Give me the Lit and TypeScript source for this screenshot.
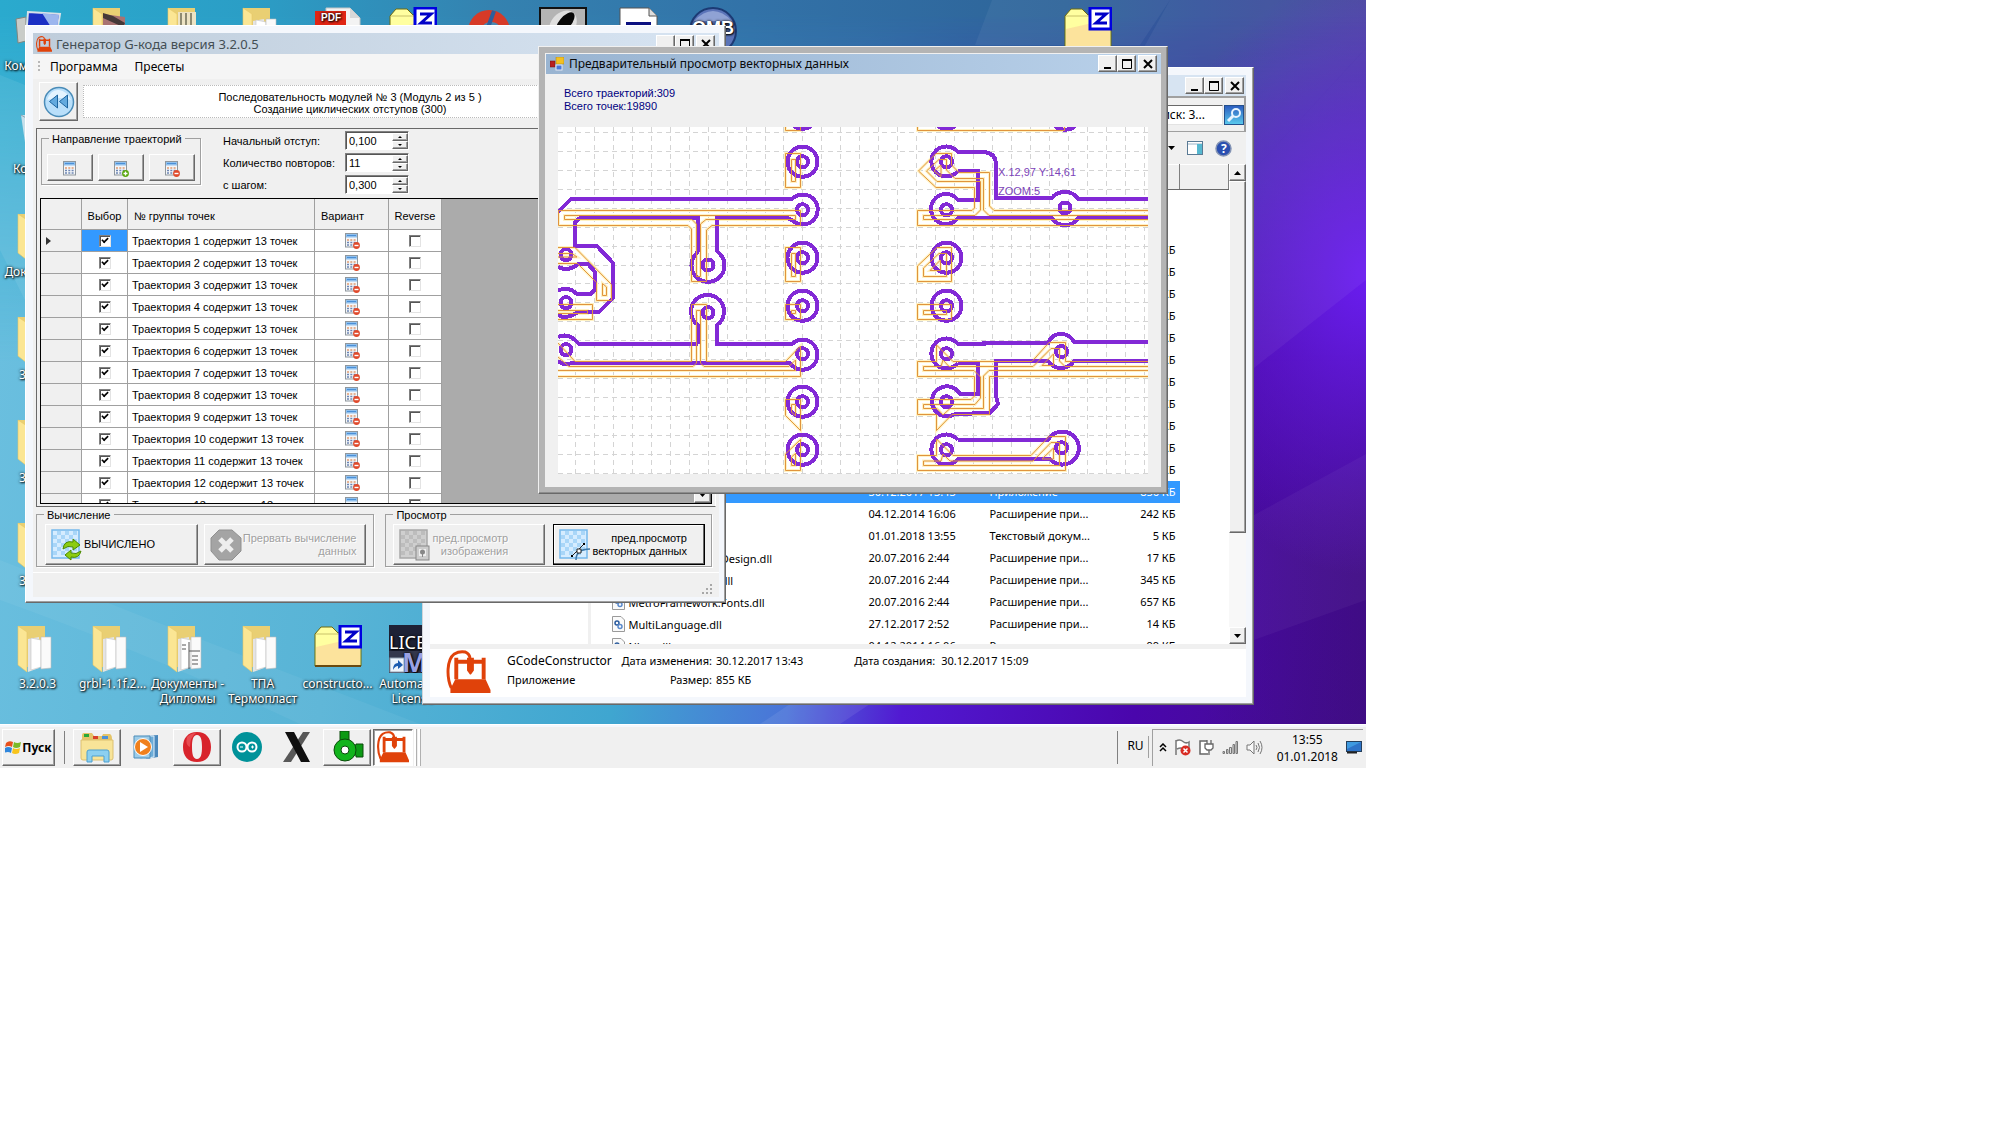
import { LitElement, html, svg, css } from "lit";
import { customElement, property } from "lit/decorators.js";

type Kind = "plain" | "plus" | "minus";

const gcodeIcon = svg`
  <path d="M5 39C0 28 0 10 8 4Q13 1 19 2Q24 4 24 9" fill="none" stroke="#e0420a" stroke-width="3"/>
  <path d="M10 30V8M38 30V8M8 12H40" fill="none" stroke="#e0420a" stroke-width="4"/>
  <path d="M21 8H28V21L25 25H24L21 21Z M9 30H40L45 41V44H4V40Z" fill="#e0420a"/>`;

const calcIcon = (kind: Kind) => html`<svg class="calc" viewBox="0 0 16 16" width="16" height="16">
  <rect x="1.500" y=".5" width="12" height="13.500" fill="#f4f6f8" stroke="#8f979e"/>
  <rect x="2" y="1" width="11" height="3.500" fill="#8fc0ee"/>
  <path d="M3 2.500H12" stroke="#4b8fd6"/>
  <path d="M3 7H12" stroke="#e09a70" stroke-width="1.500" stroke-dasharray="2 1.300"/>
  <path d="M3 9.500H12M3 12H12" stroke="#6d86b4" stroke-width="1.500" stroke-dasharray="2 1.300"/>
  ${kind === "plus"
    ? svg`<circle cx="12.500" cy="12.500" r="3.400" fill="#57a60a"/><path d="M10.500 12.500h4M12.500 10.500v4" stroke="#fff" stroke-width="1.300"/>`
    : kind === "minus"
      ? svg`<circle cx="12.500" cy="12.500" r="3.400" fill="#e04a2c"/><path d="M10.500 12.500h4" stroke="#fff" stroke-width="1.400"/>`
      : ""}
</svg>`;

const zFolder = svg`
  <path d="M1 9L7 2H18L24 8H47V41H1Z" fill="#ffffa0" stroke="#6d6a10"/>
  <path d="M2 22L46 12V40H2Z" fill="#fbd79a" opacity=".7"/>
  <path d="M2 9H26" stroke="#c9c26a"/>
  <path d="M1 41H47" stroke="#6a4a10" stroke-width="2"/>
  <rect x="26" y="1" width="21" height="21" fill="#fff" stroke="#0000e0" stroke-width="3"/>
  <path d="M31 7H42L32 16H43" fill="none" stroke="#0000c8" stroke-width="3"/>`;

const openFolder = (inner: unknown) => svg`
  <path d="M4 1H31V42H12Z" fill="#e9cf73"/>
  ${inner}
  <path d="M4 1L13 7V47L4 40Z" fill="#fbe694" stroke="#e6c766" stroke-width=".6"/>`;
const papers = svg`
  <path d="M14 14L25 12V43L14 47Z" fill="#e4e4e4"/>
  <path d="M17 13L27 15V42L17 45Z" fill="#fff" stroke="#c4c4c4" stroke-width=".6"/>
  <path d="M27 12L37 12V43L27 44Z" fill="#fafafa" stroke="#bcbcbc" stroke-width=".6"/>`;

const deskIcons: Record<string, unknown> = {
  folder: openFolder(papers),
  docs: openFolder(svg`${papers}<path d="M25 17V44M25 26H36M28 31h6M28 35h6M28 39h6M18 20h4M18 24h4" stroke="#555"/>`),
  red: openFolder(svg`<path d="M14 7L36 10V30H14Z" fill="#a87272"/><path d="M14 6L24 9L36 16L34 20L14 11Z" fill="#453838"/>`),
  books: openFolder(svg`<path d="M14 5H32V40H14Z" fill="#ece3c4"/><path d="M17 6V40M22 6V40M27 6V40" stroke="#8d8a72" stroke-width="2"/>`),
  z: zFolder,
  computer: svg`<path d="M2 12L12 10V34L4 36Z" fill="#c9ccc8" stroke="#80857f"/><path d="M14 5L46 7L42 32L12 30Z" fill="#1a2fc4" stroke="#d8e0e8" stroke-width="2"/><path d="M28 6L45 8L42 28Z" fill="#9cb6ee"/>`,
  bin: svg`<path d="M7 5H41L36 46H13Z" fill="#d9e6ee" opacity=".85"/><path d="M7 5L14 9L17 40" stroke="#8aa3b2" fill="none"/>`,
  pdf: svg`<path d="M12 1H36L46 11V47H12Z" fill="#f3f3f3" stroke="#c4c4c4"/><path d="M36 1V11H46Z" fill="#d8d8d8"/><rect x="1" y="4" width="31" height="14" fill="#e02514"/><text x="7" y="14" font-family="Liberation Sans" font-size="10" font-weight="bold" fill="#fff">PDF</text>`,
  cc: svg`<circle cx="25" cy="24" r="21" fill="#d63a28"/><circle cx="27" cy="26" r="11" fill="#4a88b0"/><path d="M30 4L22 26" stroke="#2d5f9c" stroke-width="4"/>`,
  pen: svg`<rect x="1" y="1" width="46" height="46" fill="#b4b4b4" stroke="#111" stroke-width="2"/><ellipse cx="24" cy="18" rx="12" ry="16" transform="rotate(40 24 18)" fill="#dedede"/><ellipse cx="26" cy="16" rx="6" ry="13" transform="rotate(40 26 16)" fill="#080808"/>`,
  doc: svg`<path d="M6 1H35L43 9V47H6Z" fill="#fff" stroke="#555"/><path d="M35 1V9H43" fill="#ddd" stroke="#555"/><rect x="12" y="15" width="25" height="18" fill="#0a1080"/>`,
  omb: svg`<circle cx="24" cy="24" r="23" fill="#5b74b8" stroke="#1c3a74" stroke-width="2"/><path d="M5 14Q24 -6 43 14Z" fill="#8fa2d4"/><text x="3" y="27" font-family="Liberation Sans" font-size="18" font-weight="bold" fill="#fff">OMB</text>`,
  license: svg`<rect width="48" height="48" fill="#1e2236"/><text x="0" y="24" font-family="Noto Sans" font-size="18" fill="#fff">LICE</text><rect y="26" width="48" height="22" fill="#33374c"/><text x="13" y="47" font-family="Noto Sans" font-size="27" font-weight="bold" fill="#9aa2e4">M</text><rect x="1" y="33" width="14" height="14" fill="#eef4fc" stroke="#90a0b0"/><path d="M4 45Q4 38 9 38V35L14 40L9 44V41Q6 41 4 45Z" fill="#1c5bb0"/>`,
};

interface Shortcut { icon: string; label: string; col: number; row: number }
const shortcuts: Shortcut[] = [
  { icon: "computer", label: "Компьютер", col: 1, row: 1 },
  { icon: "red", label: "", col: 2, row: 1 },
  { icon: "books", label: "", col: 3, row: 1 },
  { icon: "folder", label: "", col: 4, row: 1 },
  { icon: "pdf", label: "", col: 5, row: 1 },
  { icon: "z", label: "", col: 6, row: 1 },
  { icon: "cc", label: "", col: 7, row: 1 },
  { icon: "pen", label: "", col: 8, row: 1 },
  { icon: "doc", label: "", col: 9, row: 1 },
  { icon: "omb", label: "", col: 10, row: 1 },
  { icon: "z", label: "", col: 15, row: 1 },
  { icon: "bin", label: "Корзина", col: 1, row: 2 },
  { icon: "folder", label: "Документы", col: 1, row: 3 },
  { icon: "folder", label: "3.2.0.0", col: 1, row: 4 },
  { icon: "folder", label: "3.2.0.1", col: 1, row: 5 },
  { icon: "folder", label: "3.2.0.2", col: 1, row: 6 },
  { icon: "folder", label: "3.2.0.3", col: 1, row: 7 },
  { icon: "folder", label: "grbl-1.1f.2...", col: 2, row: 7 },
  { icon: "docs", label: "Документы - Дипломы", col: 3, row: 7 },
  { icon: "folder", label: "ТПА Термопласт", col: 4, row: 7 },
  { icon: "z", label: "constructo...", col: 5, row: 7 },
  { icon: "license", label: "Automation License", col: 6, row: 7 },
];

@customElement("caption-buttons")
class CaptionButtons extends LitElement {
  static styles = css`
    :host { display: flex; gap: 2px; flex: none; }
    .pair { display: flex; }
    button { width: 19px; height: 17px; padding: 0; border: 1px solid; border-color: #fff #696969 #696969 #fff; box-shadow: inset -1px -1px #a0a0a0; background: #f0f0f0; display: grid; place-items: center; }
    svg { display: block; }
  `;
  render() {
    return html`
      <div class="pair">
        <button aria-label="Свернуть"><svg width="12" height="12"><path d="M2 10H9" stroke="#000" stroke-width="2"/></svg></button>
        <button aria-label="Развернуть"><svg width="12" height="12" fill="none" stroke="#000"><path d="M1.500 1.500H10.500V10.500H1.500Z"/><path d="M1 2H11" stroke-width="2"/></svg></button>
      </div>
      <button aria-label="Закрыть"><svg width="12" height="12"><path d="M2 2L10 10M10 2L2 10" stroke="#000" stroke-width="2"/></svg></button>`;
  }
}

@customElement("vector-canvas")
class VectorCanvas extends LitElement {
  static styles = css`
    :host { display: block; background: #fff; }
    svg { display: block; width: 100%; height: 100%; }
    .grid { stroke: #d4d4d4; stroke-dasharray: 5 4; }
    .copper { fill: none; stroke: #8229d6; stroke-width: 4; }
    .tool { fill: none; stroke: #e0943c; stroke-width: 1; }
    .halo { fill: none; stroke: #fff2c4; stroke-width: 3; }
    .note { font: 11px "Liberation Sans", sans-serif; fill: #7c44b8; }
  `;
  private copper = [
    "M558 212L571 199H792A15 15 0 1 1 792 220L787 218H717V251L720 254A16.500 16.500 0 1 1 696 254L698 251V218H580L575 222V246H597L613 263V298L599 312H578Q566 320 558 315",
    "M558 267Q569 272 578 264H588L595 272V289L591 294H577Q567 285 558 291",
    "M698 344V325A16.500 16.500 0 1 1 717 325V344H792A15 15 0 1 1 790 363H572Q564 366 558 361",
    "M698 344H579Q569 332 558 337",
    "M958 171A15 15 0 1 1 958 152H984Q996 153 996 165V198H1052Q1056 192 1065 192T1078 199H1148",
    "M958 171H978V200H958A15 15 0 1 0 958 218H1052Q1056 225 1065 225T1078 218H1148",
    "M958 363A15 15 0 1 1 958 344H984V343H1048Q1052 334 1061 334T1074 342H1148",
    "M958 363H978V394H960A15 15 0 1 0 955 414L990 413L998 404L996 396V361H1048Q1053 368 1061 368T1074 361H1148",
    "M958 440H1048A16.500 16.500 0 1 1 1050 459H958A15 15 0 1 1 958 440",
  ];
  private pads: [number, number, number][] = [
    [802.5, 113.7, 15], [802.5, 161.7, 15], [802.5, 257.7, 15], [802.5, 305.7, 15], [802.5, 401.7, 15], [802.5, 449.7, 15],
    [946.5, 113.7, 15], [946.5, 257.7, 15], [946.5, 305.7, 15], [1065, 113.7, 16],
  ];
  private holes: [number, number][] = [
    [802.5, 161.7], [802.5, 209.7], [802.5, 257.7], [802.5, 305.7], [802.5, 353.7], [802.5, 401.7], [802.5, 449.7],
    [946.5, 161.7], [946.5, 209.7], [946.5, 257.7], [946.5, 305.7], [946.5, 353.7], [946.5, 401.7], [946.5, 449.7],
    [1065, 208], [1061.5, 351.5], [1061.5, 447.7], [708, 265], [708, 312.7], [566, 254.7], [566, 302.7], [566, 349.7],
  ];
  private tool = [
    "M785.500 127V130.500H800.500V127",
    "M785.500 153.500h15v34h-15zM791.500 159.500h4v22h-4z",
    "M800.500 210.500V225.500H712L706.500 230V281.500H691.500V229L688 225.500H558.500V210.500Z",
    "M795.500 215.500V219.500H706L700.500 224V276.500H696.500V224L692 219.500H564.500V215.500Z",
    "M785.500 247.500h15v34h-15zM791.500 253.500h4v23h-4z",
    "M785.500 304.500h15v15h-15zM791.500 310.500h4v3h-4z",
    "M558 343L575 361.500H691.500V304.500H706.500V361.500H785.500L800.500 346V376.500H558",
    "M558 357L569 366.500H693L696.500 363V310.500H700.500V363L704 366.500H789L795.500 360V370.500H558",
    "M785.500 399.500H800.500V430.500L785.500 415.500ZM791.500 404.500H795.500V416L791.500 412Z",
    "M785.500 454L800.500 439.500V470.500H785.500ZM791.500 457L795.500 453.500V465.500H791.500Z",
    "M558 304.500H592.500V319.500H558M558 310.500H587.500V313.500H558",
    "M558 247.500H575L611.500 284.500V300.500H596.500V282.500L577.500 263.500H558M602.500 283.500L606.500 287V295.500H602.500ZM558 253.500H572L577 257H558",
    "M917.500 127V130.500H1064.500V127",
    "M1148 210.500H994L989.500 206V172.500H959L951.500 165V153.500H936L918.500 171L936 187.500H974.500V208L972 210.500H917.500V225.500H1148",
    "M1148 215.500H989L983.500 210V178.500H955L946.500 170V159.500H939L926.500 171L937 181.500H980.500V210L975 215.500H923.500V219.500H1148",
    "M934 171L941 165V176.500Z",
    "M917.500 266L937 247.500H951.500V281.500H917.500ZM923.500 268L939 253.500H946.500V276.500H923.500ZM930 270.500L940.500 260V270.500Z",
    "M917.500 304.500h34v15h-34zM923.500 310.500h23v4h-23z",
    "M1148 361.500H1065.500V342.500H1049L1032 361.500H953L936.500 345V361.500H917.500V376.500H974.500V396L971 399.500H917.500V414.500H936.500V430.500L952 414.500H989.500V376.500H1148",
    "M1148 366.500H1065L1059.500 361V348.500H1051L1033 366.500H949L943 360L941 366.500H923.500V370.500H974L980.500 377V398L975 404.500H923.500V408.500H937L943 415L950 408.500H983.500V376L989 370.500H1148",
    "M1042 365.500L1053.500 354V365.500Z",
    "M917.500 455.500H936.500V439L953 455.500H1031L1049 436.500H1065.500V470.500H917.500Z",
    "M923.500 461H941L943 454L950 461H1033L1051 442.500H1059.500V465.500H923.500ZM1042 459L1053.500 448V459Z",
  ];
  render() {
    const v = Array.from({ length: 31 }, (_, i) => Math.round(575 + i * 18.95) + 0.5);
    const h = Array.from({ length: 19 }, (_, i) => Math.round(132 + i * 18.93) + 0.5);
    return html`<svg viewBox="558 127 590 347" preserveAspectRatio="xMidYMid slice" role="img" aria-label="Векторные данные">
      <g class="grid">
        ${v.map((x) => svg`<path d="M${x} 127V474"/>`)}
        ${h.map((y) => svg`<path d="M558 ${y}H1148"/>`)}
      </g>
      <path class="halo" d=${this.tool.join("")}/>
      <g class="copper" shape-rendering="crispEdges">
        ${this.copper.map((d) => svg`<path d=${d}/>`)}
        ${this.pads.map(([x, y, r]) => svg`<circle cx=${x} cy=${y} r=${r}/>`)}
        ${this.holes.map(([x, y]) => svg`<circle cx=${x} cy=${y} r="5.500"/>`)}
      </g>
      <path class="tool" d=${this.tool.join("")}/>
      <text class="note" x="998" y="176">X.12,97 Y:14,61</text>
      <text class="note" x="998" y="195">ZOOM:5</text>
    </svg>`;
  }
}

@customElement("preview-window")
class PreviewWindow extends LitElement {
  static styles = css`
    :host { display: flex; flex-direction: column; box-sizing: border-box; padding: 6px; background: #b4b4b4; border: 1px solid; border-color: #f0f0f0 #696969 #696969 #f0f0f0; box-shadow: inset -1px -1px #8c8c8c; font: 11px "Liberation Sans", Arial, sans-serif; }
    .title { box-sizing: border-box; display: flex; align-items: center; gap: 5px; height: 21px; padding: 0 4px 1px 4px; background: linear-gradient(90deg, #99b4d1, #b9d1ea); border-top: 1px solid #f0f0f0; border-left: 1px solid #f0f0f0; font: 12px "Noto Sans", sans-serif; color: #0a0a0a; }
    .title span { flex: 1; white-space: nowrap; }
    .body { flex: 1; display: flex; flex-direction: column; min-height: 0; background: #f0f0f0; padding: 13px 13px 13px; }
    .totals { margin: 0 0 13px 6px; font-size: 11px; line-height: 13px; color: #000080; height: 27px; }
    vector-canvas { flex: 1; min-height: 0; }
  `;
  render() {
    return html`
      <div class="title">
        <svg width="14" height="14"><rect x="0" y="4" width="5" height="6" fill="#b82020" stroke="#701010" stroke-width=".5"/><rect x="6" y="0" width="8" height="7" fill="#f4c020" stroke="#a88010" stroke-width=".5"/><rect x="6" y="8" width="6" height="5" fill="#4a78d8" stroke="#e4e8f4"/></svg>
        <span>Предварительный просмотр векторных данных</span>
        <caption-buttons></caption-buttons>
      </div>
      <div class="body">
        <div class="totals">Всего траекторий:309<br>Всего точек:19890</div>
        <vector-canvas></vector-canvas>
      </div>`;
  }
}

@customElement("generator-window")
class GeneratorWindow extends LitElement {
  @property({ type: Number }) rows = 13;
  static styles = css`
    :host { display: flex; flex-direction: column; box-sizing: border-box; padding: 7px 6px 5px 7px; background: #f4f7fc; border: 1px solid; border-color: #fff #696969 #696969 #fff; box-shadow: inset -1px -1px #a0a0a0; font: 11px "Liberation Sans", Arial, sans-serif; color: #000; }
    .title { display: flex; align-items: center; gap: 4px; height: 21px; padding: 0 4px 0 3px; background: linear-gradient(90deg, #bfcddb, #d7e4f2); font: 13px "Noto Sans", sans-serif; color: #434e54; }
    .title span { flex: 1; white-space: nowrap; }
    .menu { display: flex; align-items: center; gap: 17px; height: 25px; background: #f5f5f5; padding-left: 5px; font: 12px "Noto Sans", sans-serif; }
    .menu a { color: inherit; text-decoration: none; }
    .grip { width: 2px; height: 12px; margin-right: -7px; background: repeating-linear-gradient(#b8b8b8 0 2px, transparent 2px 4px); }
    .body { flex: 1; display: flex; flex-direction: column; background: #f0f0f0; padding: 3px 3px 0 3px; min-height: 0; }
    button { font: inherit; color: inherit; padding: 0; background: #f0f0f0; border: 1px solid; border-color: #fff #696969 #696969 #fff; box-shadow: inset -1px -1px #a0a0a0; }
    .module { display: flex; align-items: center; gap: 5px; padding-left: 3px; }
    .back { width: 39px; height: 39px; display: grid; place-items: center; }
    .caption { flex: 0 1 534px; height: 33px; background: #fff; border: 1px dotted #bbb; text-align: center; line-height: 12px; padding-top: 5px; box-sizing: border-box; }
    .panel { flex: 1; display: flex; flex-direction: column; min-height: 0; margin-top: 7px; border: 1px solid; border-color: #696969 #fff #696969 #696969; padding: 2px 3px; }
    .top { display: flex; align-items: flex-start; gap: 22px; height: 67px; padding-left: 1px; }
    fieldset { margin: 0; padding: 0; border: 1px solid #a0a0a0; box-shadow: 1px 1px #fff; min-width: 0; }
    legend { margin-left: 7px; padding: 2px 3px 0; line-height: 13px; }
    .dir { width: 160px; box-sizing: border-box; height: 54px; }
    .dir .set { display: flex; gap: 5px; padding: 8px 5px 0; }
    .dir button { width: 46px; height: 27px; display: grid; place-items: center; }
    .dir svg { margin: 2px 0 0 0; }
    .nums { display: grid; grid-template-columns: 122px 64px; row-gap: 3px; align-items: center; white-space: nowrap; }
    .spin { display: flex; height: 19px; box-sizing: border-box; border: 1px solid; border-color: #808080 #fff #fff #808080; box-shadow: inset 1px 1px #555; background: #fff; padding: 1px 0 0 2px; }
    .spin input { flex: 1; min-width: 0; border: 0; background: none; padding: 0 1px; font: inherit; outline: 0; }
    .steps { width: 16px; display: flex; flex-direction: column; }
    .steps button { flex: 1; display: grid; place-items: center; min-height: 0; }
    .list { flex: 1; min-height: 0; display: flex; overflow: hidden; background: #ababab; border: 1px solid #000; }
    .scroll { width: 17px; margin-left: auto; display: flex; flex-direction: column; justify-content: flex-end; background: #ececec; }
    .scroll button { height: 17px; display: grid; place-items: center; }
    table { border-collapse: separate; border-spacing: 0; table-layout: fixed; width: 401px; background: #fff; align-self: flex-start; }
    th, td { box-sizing: border-box; height: 22px; padding: 0; font-weight: normal; border-right: 1px solid #a0a0a0; border-bottom: 1px solid #a0a0a0; text-align: center; white-space: nowrap; overflow: hidden; line-height: 14px; }
    thead th { height: 31px; background: #f0f0f0; padding-top: 3px; }
    th { background: #f0f0f0; }
    tbody th { text-align: left; padding-left: 5px; }
    .name { text-align: left; padding-left: 4px; }
    th.name { padding-left: 6px; }
    th.opt { text-align: left; padding-left: 6px; }
    .current { background: #3399ff; }
    .c0 { width: 41px; } .c1 { width: 46px; } .c2 { width: 187px; } .c3 { width: 74px; } .c4 { width: 53px; }
    .calc { display: block; margin: 0 auto; }
    td input { appearance: none; display: block; width: 12px; height: 12px; margin: 0 auto; border: 1px solid; border-color: #808080 #e3e3e3 #e3e3e3 #808080; box-shadow: inset 1px 1px #555; background: #fff; }
    td input:checked { position: relative; }
    td input:checked::after { content: ""; position: absolute; left: 1px; top: 1px; width: 6px; height: 3px; border-left: 2px solid #000; border-bottom: 2px solid #000; box-sizing: content-box; scale: 0.8; rotate: -45deg; }
    .groups { display: flex; gap: 11px; padding-right: 4px; }
    .groups fieldset { flex: 339 1 0; height: 60px; box-sizing: border-box; }
    .groups fieldset.view { flex: 327 1 0; }
    .groups .set { display: grid; grid-template-columns: 153fr 163fr; gap: 6px; padding: 2px 7px 0 8px; }
    .groups .view .set { grid-template-columns: 1fr 1fr; gap: 8px; padding: 2px 6px 0 7px; }
    .big { min-width: 0; height: 41px; display: flex; align-items: center; gap: 1px; padding: 0 10px 0 5px; line-height: 13px; text-align: right; white-space: nowrap; }
    .big svg { flex: none; }
    .big span { flex: 1; }
    .big.left span { text-align: left; }
    .big:disabled { color: #a0a0a0; text-shadow: 1px 1px #fff; }
    .big.off { padding-right: 36px; }
    .big.focus { border-color: #000; box-shadow: inset -1px -1px #696969, inset 1px 1px #fff; padding-right: 17px; }
    .status { height: 23px; border-top: 1px solid #fff; margin: 5px -3px 0; display: flex; justify-content: flex-end; align-items: flex-end; padding: 0 6px 1px; box-sizing: content-box; }
  `;
  private num(id: string, label: string, value: string) {
    return html`<label for=${id}>${label}</label>
      <div class="spin"><input id=${id} .value=${value}>
        <div class="steps">
          <button aria-label="Больше"><svg width="4" height="2"><path d="M2 0L4 2H0Z"/></svg></button>
          <button aria-label="Меньше"><svg width="4" height="2"><path d="M0 0H4L2 2Z"/></svg></button>
        </div></div>`;
  }
  private tile(grey: boolean, badge: unknown) {
    const [a, b, c] = grey ? ["#cfcfcf", "#bdbdbd", "#a8a8a8"] : ["#d5ecff", "#a9d6f8", "#74b8ec"];
    const cells = [];
    for (let y = 0; y < 6; y++) for (let x = 0; x < 6; x++) if ((x + y) % 2) cells.push(svg`<rect x=${2 + x * 4} y=${2 + y * 4} width="4" height="4" fill=${b}/>`);
    return html`<svg width="32" height="32"><rect x="1" y="1" width="27" height="28" fill=${a} stroke=${c} stroke-width="1.500"/>${cells}${badge}</svg>`;
  }
  render() {
    return html`
      <div class="title">
        <svg width="16" height="16" viewBox="0 0 45 45">${gcodeIcon}</svg>
        <span>Генератор G-кода версия 3.2.0.5</span>
        <caption-buttons></caption-buttons>
      </div>
      <nav class="menu"><i class="grip"></i><a href="#p">Программа</a><a href="#s">Пресеты</a></nav>
      <div class="body">
        <div class="module">
          <button class="back" aria-label="Назад"><svg width="32" height="32"><circle cx="16" cy="16" r="14.500" fill="#b9dffa" stroke="#4a8cb8" stroke-width="1.500"/><path d="M4 14Q8 3 16 4T28 14Q16 10 4 14Z" fill="#e4f4ff"/><path d="M14.500 9V22L6.500 15.500ZM24.500 9V22L16.500 15.500Z" fill="#63aade" stroke="#1e66a0"/></svg></button>
          <div class="caption">Последовательность модулей № 3 (Модуль 2 из 5 )<br>Создание циклических отступов (300)</div>
        </div>
        <div class="panel">
          <div class="top">
            <fieldset class="dir"><legend>Направление траекторий</legend>
              <div class="set">
                <button aria-label="Исходное">${calcIcon("plain")}</button>
                <button aria-label="Добавить">${calcIcon("plus")}</button>
                <button aria-label="Убрать">${calcIcon("minus")}</button>
              </div>
            </fieldset>
            <div class="nums">
              ${this.num("offset", "Начальный отступ:", "0,100")}
              ${this.num("count", "Количество повторов:", "11")}
              ${this.num("step", "с шагом:", "0,300")}
            </div>
          </div>
          <div class="list">
            <table>
              <colgroup><col class="c0"><col class="c1"><col class="c2"><col class="c3"><col class="c4"></colgroup>
              <thead><tr><th></th><th>Выбор</th><th class="name">№ группы точек</th><th class="opt">Вариант</th><th>Reverse</th></tr></thead>
              <tbody>
                ${Array.from({ length: this.rows }, (_, i) => html`<tr>
                  <th>${i === 0 ? html`<svg width="6" height="8"><path d="M0 0L5 4L0 8Z" fill="#333"/></svg>` : ""}</th>
                  <td class=${i === 0 ? "current" : ""}><input type="checkbox" checked aria-label="Выбор ${i + 1}"></td>
                  <td class="name">Траектория ${i + 1} содержит 13 точек</td>
                  <td>${calcIcon("minus")}</td>
                  <td><input type="checkbox" aria-label="Reverse ${i + 1}"></td>
                </tr>`)}
              </tbody>
            </table>
            <div class="scroll"><button aria-label="Вниз"><svg width="7" height="4"><path d="M0 0H7L3.500 4Z"/></svg></button></div>
          </div>
        </div>
        <div class="groups">
          <fieldset><legend>Вычисление</legend>
            <div class="set">
              <button class="big left">${this.tile(false, svg`<path d="M12 20Q13 11 22 13V10L29 16L22 21V18Q17 16 12 20Z" fill="#8ccc10" stroke="#4a8a00"/><path d="M30 22Q28 30 20 28V31L14 26L20 21V24Q25 26 30 22Z" fill="#8ccc10" stroke="#4a8a00"/>`)}<span>ВЫЧИСЛЕНО</span></button>
              <button class="big" disabled><svg width="32" height="32"><path d="M9 1H22L31 9V22L22 31H9L1 22V9Z" fill="#a4a4a4" stroke="#909090"/><path d="M10 10L22 22M22 10L10 22" stroke="#eee" stroke-width="5"/></svg><span>Прервать вычисление<br>данных</span></button>
            </div>
          </fieldset>
          <fieldset class="view"><legend>Просмотр</legend>
            <div class="set">
              <button class="big off" disabled>${this.tile(true, svg`<rect x="17" y="17" width="13" height="14" fill="#ccc" stroke="#888"/><path d="M20 20H27V27H20Z" fill="#eee"/><circle cx="23.500" cy="23" r="2.500" fill="#888"/><path d="M23.500 23V28" stroke="#888"/>`)}<span>пред.просмотр<br>изображения</span></button>
              <button class="big focus">${this.tile(false, svg`<path d="M17 31Q17 20 31 20" fill="none" stroke="#3e78a8" stroke-width="1.500"/><path d="M13 27L25 15" stroke="#222"/><path d="M18 20h4v4h-4z" fill="#fff" stroke="#222"/><path d="M12 26h2v2h-2zM24 14h2v2h-2z"/>`)}<span>пред.просмотр<br>векторных данных</span></button>
            </div>
          </fieldset>
        </div>
        <div class="status"><svg width="12" height="12" fill="#a8a8a8"><path d="M9 0h2v2h-2zM5 4h2v2h-2zM9 4h2v2h-2zM1 8h2v2h-2zM5 8h2v2h-2zM9 8h2v2h-2z"/></svg></div>
      </div>`;
  }
}

interface FileRow { name: string; date: string; type: string; size: string; selected?: boolean }
const dll = "Расширение при...";
const upperRows: FileRow[] = Array.from({ length: 13 }, (_, i) => ({ name: "", date: "", type: "", size: i < 2 ? "" : "КБ" }));
const files: FileRow[] = [
  ...upperRows,
  { name: "GCodeConstructor", date: "30.12.2017 13:43", type: "Приложение", size: "856 КБ", selected: true },
  { name: "", date: "04.12.2014 16:06", type: dll, size: "242 КБ" },
  { name: "", date: "01.01.2018 13:55", type: "Текстовый докум...", size: "5 КБ" },
  { name: "MetroFramework.Design.dll", date: "20.07.2016 2:44", type: dll, size: "17 КБ" },
  { name: "MetroFramework.dll", date: "20.07.2016 2:44", type: dll, size: "345 КБ" },
  { name: "MetroFramework.Fonts.dll", date: "20.07.2016 2:44", type: dll, size: "657 КБ" },
  { name: "MultiLanguage.dll", date: "27.12.2017 2:52", type: dll, size: "14 КБ" },
  { name: "NLua.dll", date: "04.12.2014 16:06", type: dll, size: "99 КБ" },
];

@customElement("explorer-window")
class ExplorerWindow extends LitElement {
  static styles = css`
    :host { display: flex; flex-direction: column; box-sizing: border-box; padding: 7px; background: #f4f7fc; border: 1px solid; border-color: #fff #696969 #696969 #d0d4da; box-shadow: inset -1px -1px #a0a0a0; font: 11px "Noto Sans", "Open Sans", sans-serif; color: #000; }
    .title { display: flex; justify-content: flex-end; align-items: center; height: 21px; padding-right: 2px; background: #d7e4f2; }
    .address { display: flex; justify-content: flex-end; align-items: center; gap: 1px; height: 36px; box-sizing: border-box; background: #f0f0f0; border: 1px solid #a0a0a0; border-width: 2px 2px 1px 0; }
    .address input { width: 110px; height: 20px; box-sizing: border-box; border: 1px solid; border-color: #696969 #e3e3e3 #e3e3e3 #696969; font: inherit; font-size: 12px; padding: 0 17px 0 2px; text-align: right; }
    .go { width: 20px; height: 20px; padding: 0; border: 1px solid #24508c; background: linear-gradient(#2c5ec0, #59c8ec); display: grid; place-items: center; }
    .tools { display: flex; justify-content: flex-end; align-items: center; gap: 12px; height: 32px; background: #f0f0f0; padding-right: 14px; }
    .main { flex: 1; min-height: 0; display: flex; background: #fff; border-bottom: 5px solid #f0f0f0; }
    .tree { width: 158px; border-right: 3px solid #f0f0f0; flex: none; }
    .files { flex: 1; overflow: hidden; }
    table { width: 100%; border-collapse: collapse; table-layout: fixed; }
    th { height: 24px; padding: 0; background: #f0f0f0; border: 1px solid; border-color: #fff #808080 #696969 #fff; }
    td { height: 22px; padding: 0; white-space: nowrap; line-height: 16px; }
    .gap { height: 5px; line-height: 5px; }
    .name { padding-left: 20px; }
    .name svg { vertical-align: -3px; margin-right: 4px; }
    .size { text-align: right; padding-right: 4px; }
    .sel td { background: #3399ff; color: #fff; }
    .sel .blank { background: none; }
    .w1 { width: 277px; } .w2 { width: 121px; } .w3 { width: 117px; } .w4 { width: 73px; }
    .scroll { width: 17px; flex: none; display: flex; flex-direction: column; background: #f8f8f8; }
    .scroll button, .thumb { border: 1px solid; border-color: #fff #696969 #696969 #fff; box-shadow: inset -1px -1px #a0a0a0; background: #f0f0f0; height: 17px; padding: 0; display: grid; place-items: center; }
    .scroll .thumb { flex: 352 1 0; }
    .rest { flex: 95 1 0; }
    .info { display: grid; grid-template-columns: 77px 114px 95px auto auto auto; justify-content: start; grid-template-rows: 22px 17px; height: 48px; background: #fff; align-items: center; }
    .info svg { grid-row: 1 / 3; justify-self: center; margin-top: 1px; align-self: start; }
    .info .k { text-align: right; padding-right: 4px; }
    .info .k2 { padding-left: 51px; padding-right: 6px; }
    .big { font-size: 12px; }
  `;
  render() {
    return html`
      <div class="title"><caption-buttons></caption-buttons></div>
      <div class="address"><input aria-label="Поиск" .value=${"Поиск: 3..."}><button class="go" aria-label="Найти"><svg width="16" height="16" fill="none" stroke="#e8f4ff" stroke-width="2"><circle cx="10" cy="6" r="4"/><path d="M7 9L2 14" stroke-width="3"/></svg></button></div>
      <div class="tools">
        <svg width="7" height="4"><path d="M0 0H7L3.500 4Z"/></svg>
        <svg width="16" height="14"><rect x=".5" y=".5" width="15" height="13" fill="#fff" stroke="#5a7a94"/><path d="M1 3H15" stroke="#9ab4c8"/><rect x="10" y="3" width="5" height="10" fill="#56b8d0"/></svg>
        <svg width="17" height="17"><circle cx="8.500" cy="8.500" r="7.500" fill="#2a4fb0" stroke="#8494b4" stroke-width="1.500"/><text x="6" y="13" font-family="Noto Sans" font-size="12" font-weight="bold" fill="#fff">?</text></svg>
      </div>
      <div class="main">
        <div class="tree"></div>
        <div class="files">
          <table>
            <colgroup><col class="w1"><col class="w2"><col class="w3"><col class="w4"><col></colgroup>
            <thead><tr><th></th><th></th><th></th><th></th><th></th></tr></thead>
            <tbody>
              <tr><td class="gap" colspan="5"></td></tr>
              ${files.map((f) => html`<tr class=${f.selected ? "sel" : ""}>
                <td class="name">${f.name ? html`<svg width="13" height="16"><path d="M.5 .5H9L12.500 4V15.500H.5Z" fill="#fafafa" stroke="#9a9a9a"/><circle cx="5" cy="7" r="2" fill="none" stroke="#2a5a9c" stroke-width="1.500"/><circle cx="8" cy="10.500" r="2" fill="none" stroke="#5a8acc" stroke-width="1.500"/></svg>${f.name}` : ""}</td>
                <td>${f.date}</td><td>${f.type}</td><td class="size">${f.size}</td><td class="blank"></td>
              </tr>`)}
            </tbody>
          </table>
        </div>
        <div class="scroll">
          <button aria-label="Вверх"><svg width="7" height="4"><path d="M3.500 0L7 4H0Z"/></svg></button>
          <div class="thumb"></div><div class="rest"></div>
          <button aria-label="Вниз"><svg width="7" height="4"><path d="M0 0H7L3.500 4Z"/></svg></button>
        </div>
      </div>
      <div class="info">
        <svg width="45" height="44" viewBox="0 0 45 45">${gcodeIcon}</svg>
        <span class="big">GCodeConstructor</span><span class="k">Дата изменения:</span><span>30.12.2017 13:43</span><span class="k2">Дата создания:</span><span>30.12.2017 15:09</span>
        <span>Приложение</span><span class="k">Размер:</span><span>855 КБ</span>
      </div>`;
  }
}

@customElement("task-bar")
class TaskBar extends LitElement {
  static styles = css`
    :host { display: flex; align-items: center; box-sizing: border-box; height: 44px; padding: 4px 3px 3px 2px; background: #f0f0f0; border-top: 1px solid #fff; box-shadow: inset 0 2px #f4f7fc; font: 12px "Noto Sans", sans-serif; }
    button { height: 37px; padding: 0; background: none; border: 1px solid transparent; font: inherit; display: grid; place-items: center; }
    .raised { border-color: #fff #696969 #696969 #fff; box-shadow: inset -1px -1px #a0a0a0; }
    .start { width: 53px; display: flex; align-items: center; justify-content: center; gap: 1px; font-size: 12px; font-weight: bold; }
    .sep { width: 2px; height: 33px; margin: 0 8px 0 7px; border-right: 1px solid #808080; }
    .apps { display: flex; gap: 2px; }
    .apps button { width: 48px; }
    .apps .pressed { width: 40px; background: #fff; border-color: #696969 #fff #fff #696969; box-shadow: inset 1px 1px #a0a0a0; }
    .stack { width: 7px; margin-left: 1px; height: 37px; background: repeating-linear-gradient(90deg, #fff 0 2px, #b0b0b0 2px 3px, #f0f0f0 3px 4px); }
    .fill { flex: 1; }
    .lang { margin: 0 4px 3px 1px; }
    .thin { width: 1px; height: 22px; background: #a0a0a0; margin-right: 3px; }
    .tray { display: flex; align-items: center; gap: 7px; height: 37px; box-sizing: border-box; padding: 0 1px 0 6px; border-left: 1px solid #a0a0a0; border-top: 1px solid #a0a0a0; }
    .clock { text-align: center; line-height: 17px; margin: 0 1px 0 7px; }
  `;
  render() {
    return html`
      <button class="start raised"><svg width="16" height="16"><path d="M1 4Q4 1 8 3L7 8Q4 6 0 8Z" fill="#e8501c"/><path d="M9 3Q12 5 16 3L15 8Q11 10 8 8Z" fill="#7cba28"/><path d="M0 9Q3 7 7 9L6 14Q3 12-1 14Z" fill="#2f86dc"/><path d="M8 9Q11 11 15 9L14 14Q10 16 7 14Z" fill="#f8c41c"/></svg>Пуск</button>
      <div class="sep"></div>
      <div class="apps">
        <button class="raised" aria-label="Проводник"><svg width="34" height="32"><path d="M2 4Q2 2 4 2H12L14 5H22L23 3H30Q32 4 32 8V28H2Z" fill="#e4c468"/><path d="M4 3h5v3h-5z" fill="#28a838"/><path d="M13 5h5v3h-5z" fill="#d84028"/><path d="M22 5h6v3h-6z" fill="#4a90d8"/><path d="M1 9H33V27Q33 29 31 29H3Q1 29 1 27Z" fill="#f8e498" stroke="#dcc070"/><path d="M7 31V21Q7 19 9 19H27Q29 19 29 21V31H24V25H12V31Z" fill="#8cd0f0" stroke="#4ca0d0"/></svg></button>
        <button aria-label="Проигрыватель"><svg width="30" height="28"><path d="M12 3L26 2V24L14 26Z" fill="#4a88bc"/><path d="M8 3H22V24L8 26Z" fill="#6cacd8" stroke="#e0f0fc"/><path d="M2 3H18V25H2Z" fill="#9ccce8" stroke="#4c8cb8"/><circle cx="11" cy="14" r="8.500" fill="#f0801c" stroke="#fff"/><path d="M8 9V19L16 14Z" fill="#fff"/></svg></button>
        <button class="raised" aria-label="Opera"><svg width="30" height="32"><path fill-rule="evenodd" d="M15 1C24 1 29 7 29 16S24 31 15 31S1 25 1 16S6 1 15 1ZM15 4C11 4 10 9 10 16S11 28 15 28S20 23 20 16S19 4 15 4Z" fill="#d8242c"/><path d="M5 6Q9 2 14 2Q8 6 8 16Q3 14 5 6Z" fill="#f4686c" opacity=".6"/></svg></button>
        <button aria-label="Arduino"><svg width="32" height="32"><circle cx="16" cy="16" r="15" fill="#009299"/><g fill="none" stroke="#fff" stroke-width="2"><circle cx="11" cy="16" r="4.500"/><circle cx="21" cy="16" r="4.500"/></g><path d="M9 16h3M20 16h3M21.500 14.500v3" stroke="#fff"/></svg></button>
        <button aria-label="X"><svg width="28" height="32"><path d="M20 1H27L8 31H0Z" fill="#585858"/><path d="M2 1H11L27 31H18Z" fill="#101010"/></svg></button>
        <button class="raised" aria-label="KiCad"><svg width="34" height="32"><g stroke="#0b4a0b"><path d="M10 0H19V12H10Z" fill="#0c9a14"/><path d="M22 14H26V13H33V26H26V24H22Z" fill="#0c9a14"/><circle cx="15" cy="19" r="11" fill="#12b41c"/></g><circle cx="15" cy="19" r="4" fill="#fff" stroke="#0b4a0b"/></svg></button>
        <button class="pressed" aria-label="GCodeConstructor"><svg width="32" height="32" viewBox="0 0 45 45">${gcodeIcon}</svg></button>
      </div>
      <div class="stack"></div>
      <div class="fill"></div>
      <div class="sep"></div>
      <div class="lang">RU</div>
      <div class="thin"></div>
      <div class="tray">
        <svg width="8" height="10" fill="none" stroke="#000" stroke-width="1.500"><path d="M1 4L4 1L7 4M1 8L4 5L7 8"/></svg>
        <svg width="18" height="17"><path d="M2 1V16M2 2Q6 0 9 2.500T15 3V11Q11 12 9 10T3 10" fill="#fff" stroke="#777" stroke-width="1.500"/><circle cx="11.500" cy="11.500" r="5" fill="#d82c24"/><path d="M9.500 9.500l4 4M13.500 9.500l-4 4" stroke="#fff" stroke-width="1.500"/></svg>
        <svg width="16" height="17"><path d="M8 2H1V15H9" fill="#fff" stroke="#666" stroke-width="1.500"/><path d="M6 5H14V9L12 11H8L6 9ZM8 5V1M12 5V1M10 11V16" fill="#fff" stroke="#666" stroke-width="1.300"/></svg>
        <svg width="17" height="14" fill="#ddd" stroke="#777"><path d="M1 10.500h1.500v2h-1.500zM4.500 8.500h1.500v4h-1.500zM7.500 6.500h2v6h-2zM11 3.500h1.500v9h-1.500zM14 .5h1.500v12h-1.500z"/></svg>
        <svg width="17" height="16" fill="none" stroke="#777"><path d="M1 5H4L8 1V14L4 10H1Z" fill="#f8f8f8"/><path d="M10 5Q12 7.500 10 10M12 3Q15 7.500 12 12M14 1Q18 7.500 14 14"/></svg>
        <div class="clock">13:55<br>01.01.2018</div>
        <svg width="16" height="13"><rect x=".5" y=".5" width="15" height="10" fill="#2f74c8" stroke="#26405c"/><path d="M1 1H15L1 8Z" fill="#3f9ae0"/><path d="M1 11.500H11" stroke="#222" stroke-width="2"/></svg>
      </div>`;
  }
}

@customElement("app-root")
class AppRoot extends LitElement {
  static styles = css`
    :host { display: grid; grid-template-columns: 683fr 323fr; min-height: 100vh; background: #fff; align-items: start; }
    .screen { display: flex; flex-direction: column; overflow: hidden; }
    .desktop { position: relative; min-height: 724px; background: linear-gradient(90deg, transparent 88%, rgba(58, 6, 120, 0.35)), linear-gradient(97deg, #6cc0e0 0, #58b4d6 28%, #3fa6d0 48%, #4a74d8 60%, #5219d2 68%, #4a06ac 84%, #42108a 100%); }
    .sky { position: absolute; inset: 0; background: linear-gradient(90deg, #2aaace 0, #2b9ec6 18%, #3482b0 36%, #3272a8 55%, #2e6499 78%, #35549c 88%, #44469a 100%); mask-image: linear-gradient(#000 2%, transparent 50%); }
    .right { position: absolute; inset: 0; background: radial-gradient(ellipse 220px 300px at 100% 38%, #6a1cf0, transparent); }
    .rays { position: absolute; inset: 0; width: 100%; height: 100%; }
    .icons { display: grid; grid-template-columns: repeat(auto-fill, 75px); grid-template-rows: repeat(6, 103px) 99px; padding-top: 7px; }
    .shortcut { position: relative; display: flex; flex-direction: column; align-items: center; gap: 3px; color: #fff; text-decoration: none; text-align: center; font: 12px/15px "Noto Sans", sans-serif; text-shadow: 1px 1px 2px #000, 0 0 3px #000; height: 96px; }
    .shortcut svg { flex: none; }
    .w { position: absolute; }
    .explorer { left: 422px; top: 67px; width: 832px; height: 638px; }
    .generator { left: 25px; top: 25px; width: 701px; height: 578px; }
    .preview { left: 538px; top: 46px; width: 630px; height: 448px; }
  `;
  render() {
    return html`<div class="screen">
      <main class="desktop">
        <div class="sky"></div><div class="right"></div>
        <svg class="rays" viewBox="0 0 1366 724" preserveAspectRatio="none" fill="#fff">
          <path d="M1170 0L1060 200L1254 170L1366 48V0Z" opacity=".05"/>
          <path d="M1254 170L1366 48V280L1254 368Z" opacity=".05"/>
          <path d="M1254 515L1366 454V600L1254 640Z" opacity=".04"/>
          <path d="M992 0L975 45H1140L1170 0Z" opacity=".05"/>
          <path d="M0 75L25 85V300L0 250Z" opacity=".08"/>
          <path d="M0 560Q200 640 420 724H300Q140 650 0 600Z" opacity=".05"/>
          <path d="M760 724L790 704H870L840 724Z" opacity=".08"/>
        </svg>
        <div class="icons">
          ${shortcuts.map((s) => html`<a class="shortcut" href="#${s.icon}" style="grid-column:${s.col};grid-row:${s.row}"><svg width="48" height="48">${deskIcons[s.icon]}</svg>${s.label}</a>`)}
        </div>
        <explorer-window class="w explorer"></explorer-window>
        <generator-window class="w generator"></generator-window>
        <preview-window class="w preview"></preview-window>
      </main>
      <task-bar></task-bar>
    </div>`;
  }
}
